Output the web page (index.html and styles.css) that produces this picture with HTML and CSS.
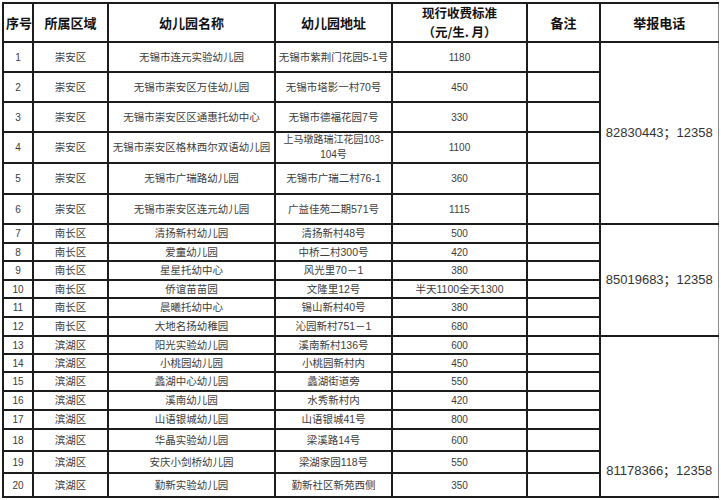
FILE: index.html
```html
<!DOCTYPE html>
<html lang="zh-CN">
<head>
<meta charset="utf-8">
<title>幼儿园收费标准</title>
<link rel="stylesheet" href="styles.css">
</head>
<body>
<div class="sheet">
<table class="fees">
  <colgroup>
    <col class="c-no"><col class="c-area"><col class="c-name"><col class="c-addr"><col class="c-fee"><col class="c-note"><col class="c-tel">
  </colgroup>
  <thead>
    <tr class="h39">
      <th>序号</th><th>所属区域</th><th>幼儿园名称</th><th>幼儿园地址</th><th class="two"><span class="hl">现行收费标准</span><span class="hl">（元/生. 月）</span></th><th>备注</th><th>举报电话</th>
    </tr>
  </thead>
  <tbody>
    <tr class="h30"><td class="num">1</td><td>崇安区</td><td>无锡市连元实验幼儿园</td><td>无锡市紫荆门花园5-1号</td><td class="num">1180</td><td></td><td class="tel" rowspan="6">82830443；12358</td></tr>
    <tr class="h30"><td class="num">2</td><td>崇安区</td><td>无锡市崇安区万佳幼儿园</td><td>无锡市塔影一村70号</td><td class="num">450</td><td></td></tr>
    <tr class="h30"><td class="num">3</td><td>崇安区</td><td>无锡市崇安区区通惠托幼中心</td><td>无锡市德福花园7号</td><td class="num">330</td><td></td></tr>
    <tr class="h31"><td class="num">4</td><td>崇安区</td><td>无锡市崇安区格林西尔双语幼儿园</td><td class="wrap"><span class="hl">上马墩路瑞江花园103-</span><span class="hl">104号</span></td><td class="num">1100</td><td></td></tr>
    <tr class="h31"><td class="num">5</td><td>崇安区</td><td>无锡市广瑞路幼儿园</td><td>无锡市广瑞二村76-1</td><td class="num">360</td><td></td></tr>
    <tr class="h30"><td class="num">6</td><td>崇安区</td><td>无锡市崇安区连元幼儿园</td><td>广益佳苑二期571号</td><td class="num">1115</td><td></td></tr>

    <tr class="h19"><td class="num">7</td><td>南长区</td><td>清扬新村幼儿园</td><td>清扬新村48号</td><td class="num">500</td><td></td><td class="tel" rowspan="6">85019683；12358</td></tr>
    <tr class="h18 thin"><td class="num">8</td><td>南长区</td><td>爱童幼儿园</td><td>中桥二村300号</td><td class="num">420</td><td></td></tr>
    <tr class="h19"><td class="num">9</td><td>南长区</td><td>星星托幼中心</td><td>风光里70－1</td><td class="num">380</td><td></td></tr>
    <tr class="h18 thin"><td class="num">10</td><td>南长区</td><td>侨谊苗苗园</td><td>文隆里12号</td><td>半天1100全天1300</td><td></td></tr>
    <tr class="h19"><td class="num">11</td><td>南长区</td><td>晨曦托幼中心</td><td>锡山新村40号</td><td class="num">380</td><td></td></tr>
    <tr class="h19 thin"><td class="num">12</td><td>南长区</td><td>大地名扬幼稚园</td><td>沁园新村751－1</td><td class="num">680</td><td></td></tr>

    <tr class="h18"><td class="num">13</td><td>滨湖区</td><td>阳光实验幼儿园</td><td>溪南新村136号</td><td class="num">600</td><td></td><td class="tel tel-low" rowspan="8">81178366；12358</td></tr>
    <tr class="h18 thin"><td class="num">14</td><td>滨湖区</td><td>小桃园幼儿园</td><td>小桃园新村内</td><td class="num">450</td><td></td></tr>
    <tr class="h19"><td class="num">15</td><td>滨湖区</td><td>蠡湖中心幼儿园</td><td>蠡湖街道旁</td><td class="num">550</td><td></td></tr>
    <tr class="h19 thin"><td class="num">16</td><td>滨湖区</td><td>溪南幼儿园</td><td>水秀新村内</td><td class="num">420</td><td></td></tr>
    <tr class="h19"><td class="num">17</td><td>滨湖区</td><td>山语银城幼儿园</td><td>山语银城41号</td><td class="num">800</td><td></td></tr>
    <tr class="h22 thin"><td class="num">18</td><td>滨湖区</td><td>华晶实验幼儿园</td><td>梁溪路14号</td><td class="num">600</td><td></td></tr>
    <tr class="h22"><td class="num">19</td><td>滨湖区</td><td>安庆小剑桥幼儿园</td><td>梁湖家园118号</td><td class="num">550</td><td></td></tr>
    <tr class="h24"><td class="num">20</td><td>滨湖区</td><td>勤新实验幼儿园</td><td>勤新社区新苑西侧</td><td class="num">350</td><td></td></tr>
  </tbody>
</table>
</div>
</body>
</html>
```

FILE: styles.css
```css
html, body {
  margin: 0;
  padding: 0;
  background: #ffffff;
}

.sheet {
  padding: 2px 0 0 2px;
}

.fees {
  border-collapse: collapse;
  table-layout: fixed;
  width: 716px;
  font-family: "Liberation Sans", "Noto Sans CJK SC", sans-serif;
  color: #3c3c3c;
}

.c-no { width: 30px; }
.c-area { width: 75px; }
.c-name { width: 167px; }
.c-addr { width: 117px; }
.c-fee { width: 135px; }
.c-note { width: 73px; }
.c-tel { width: 118px; }

.fees th,
.fees td {
  border: 2px solid #1c1c1c;
  padding: 0 2px;
  text-align: center;
  vertical-align: middle;
  white-space: nowrap;
  overflow: hidden;
}

.fees th {
  font-family: "Noto Sans CJK SC", sans-serif;
  font-weight: bold;
  font-size: 13px;
  line-height: 17px;
  color: #111111;
}

.fees th.two {
  font-size: 12.5px;
  line-height: 18.5px;
}

.hl {
  display: block;
}

.fees td {
  font-size: 10.5px;
  line-height: 13px;
}

.fees td.num {
  font-size: 10px;
}

.fees td.wrap {
  font-size: 10px;
  line-height: 14.5px;
}

.fees tr.thin td {
  border-top: 1px solid #7a7a7a;
}

.fees th:last-child,
.fees td.tel {
  border-right: 1px solid #8a8a8a;
}

.fees td.tel {
  font-size: 13px;
  line-height: 16px;
  color: #333333;
  border-top: 2px solid #1c1c1c;
}

.fees td.tel-low {
  vertical-align: bottom;
  padding-bottom: 17px;
}

.h39 { height: 39px; }
.h31 { height: 31px; }
.h30 { height: 30px; }
.h24 { height: 24px; }
.h22 { height: 22px; }
.h19 { height: 19px; }
.h18 { height: 18px; }
```
